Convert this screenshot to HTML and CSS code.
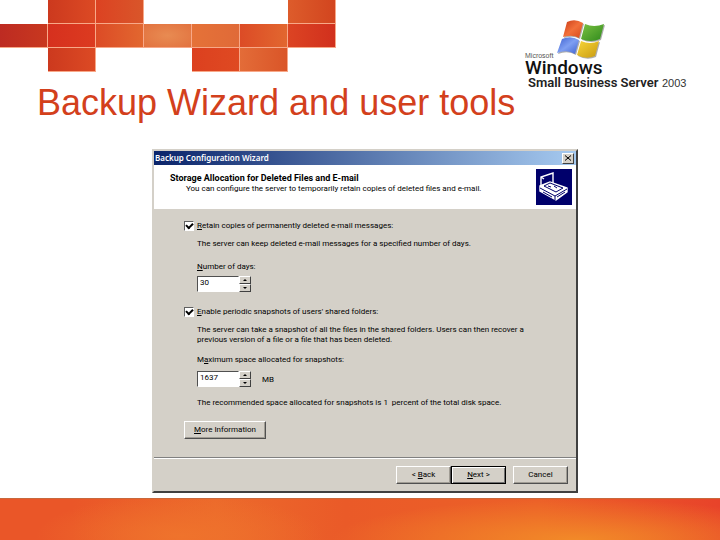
FILE: index.html
```
<!DOCTYPE html>
<html lang="en">
<head>
<meta charset="utf-8">
<title>Backup Wizard and user tools</title>
<link rel="stylesheet" href="styles.css">
</head>
<body>
<header class="top">
  <div class="intro">
    <div class="tiles" aria-hidden="true">
      <i></i><i class="t a"></i><i class="t b"></i><i></i><i></i><i></i><i class="t c"></i>
      <i class="t d"></i><i class="t e"></i><i class="t f"></i><i class="t g"></i><i class="t h"></i><i class="t f"></i><i class="t j"></i>
      <i></i><i class="t a"></i><i></i><i></i><i class="t k"></i><i class="t l"></i><i></i>
    </div>
    <h1>Backup Wizard and user tools</h1>
  </div>
  <svg class="logo" viewBox="0 0 196 94" role="img" aria-label="Microsoft Windows Small Business Server 2003">
    <defs>
      <linearGradient id="r" x1="0" y1="0" x2="1" y2="1"><stop offset="0" stop-color="#c93a16"/><stop offset=".5" stop-color="#f2703a"/><stop offset="1" stop-color="#d5481c"/></linearGradient>
      <linearGradient id="g" x1="0" y1="0" x2="1" y2="1"><stop offset="0" stop-color="#7cc242"/><stop offset="1" stop-color="#2f8a1c"/></linearGradient>
      <linearGradient id="b" x1="0" y1="0" x2="1" y2="1"><stop offset="0" stop-color="#3c5fd0"/><stop offset=".5" stop-color="#7f9ff2"/><stop offset="1" stop-color="#3f62cf"/></linearGradient>
      <linearGradient id="y" x1="0" y1="0" x2="1" y2="1"><stop offset="0" stop-color="#f8d63a"/><stop offset="1" stop-color="#c89a10"/></linearGradient>
    </defs>
    <g fill="#777" opacity=".6" transform="translate(1 1)">
      <path d="M43 22Q51 18 59 23L55 38Q48 34 39 37Z"/>
      <path d="M61 24Q70 28 80 24L76 39Q67 43 57 39Z"/>
      <path d="M38 39Q47 35 55 40L51 54Q43 49 33 53Z"/>
      <path d="M57 41Q66 45 75 41L71 56Q62 60 53 55Z"/>
    </g>
    <path fill="url(#r)" d="M43 22Q51 18 59 23L55 38Q48 34 39 37Z"/>
    <path fill="url(#g)" d="M61 24Q70 28 80 24L76 39Q67 43 57 39Z"/>
    <path fill="url(#b)" d="M38 39Q47 35 55 40L51 54Q43 49 33 53Z"/>
    <path fill="url(#y)" d="M57 41Q66 45 75 41L71 56Q62 60 53 55Z"/>
    <text class="maker" x="1" y="58">Microsoft</text>
    <text class="brand" x="1" y="74">Windows</text>
    <text class="edition" x="4" y="87">Small Business Server</text>
    <text class="year" x="138" y="87">2003</text>
  </svg>
</header>

<main>
  <form class="dialog">
    <div class="titlebar">
      <span>Backup Configuration Wizard</span>
      <button type="button" class="close" aria-label="Close"><svg viewBox="0 0 8 8"><path d="M1 1.5L7 6.5M7 1.5L1 6.5"/></svg></button>
    </div>
    <div class="banner">
      <div>
        <h2>Storage Allocation for Deleted Files and E-mail</h2>
        <p>You can configure the server to temporarily retain copies of deleted files and e-mail.</p>
      </div>
      <svg class="tape" viewBox="0 0 36 36" aria-hidden="true">
        <rect width="36" height="36" fill="#00006b"/>
        <g fill="none" stroke="#fff" stroke-width="1.4">
          <path d="M5 18V8L17 4V14M5 8L8 10"/>
          <path fill="#fff" d="M4 17L14 13L31 19V23L20 31L4 22Z"/>
        </g>
        <g fill="none" stroke="#00006b">
          <path d="M4 19L19 27L31 20M19 27V31M8 17L14 14L27 19L20 23Z"/>
          <path d="M12 17L15 18M18 17L21 19M7 23L16 28M21 28L29 23"/>
        </g>
      </svg>
    </div>
    <div class="body">
      <div class="check"><input type="checkbox" id="retain" checked><label for="retain"><u>R</u>etain copies of permanently deleted e-mail messages:</label></div>
      <div class="group">
        <p>The server can keep deleted e-mail messages for a specified number of days.</p>
        <label class="name" for="days"><u>N</u>umber of days:</label>
        <div class="spin">
          <input type="text" id="days" value="30">
          <div class="arrows"><button type="button" class="up" aria-label="More days"></button><button type="button" class="down" aria-label="Fewer days"></button></div>
        </div>
      </div>
      <div class="check second"><input type="checkbox" id="snap" checked><label for="snap"><u>E</u>nable periodic snapshots of users' shared folders:</label></div>
      <div class="group">
        <p>The server can take a snapshot of all the files in the shared folders. Users can then recover a<br>previous version of a file or a file that has been deleted.</p>
        <label class="name limit" for="space">M<u>a</u>ximum space allocated for snapshots:</label>
        <div class="spin">
          <input type="text" id="space" value="1637">
          <div class="arrows"><button type="button" class="up" aria-label="More space"></button><button type="button" class="down" aria-label="Less space"></button></div>
          <span class="unit">MB</span>
        </div>
        <p class="advice">The recommended space allocated for snapshots is 1&nbsp; percent of the total disk space.</p>
      </div>
      <button type="button" class="btn more"><u>M</u>ore Information</button>
    </div>
    <div class="actions">
      <button type="button" class="btn">&lt; <u>B</u>ack</button><button type="button" class="btn default"><u>N</u>ext &gt;</button><button type="button" class="btn cancel">Cancel</button>
    </div>
  </form>
</main>
<div class="band"></div>
</body>
</html>
```
FILE: styles.css
```
* { box-sizing: border-box; }
body {
  margin: 0;
  min-height: 100vh;
  display: flex;
  flex-direction: column;
  background: #fff;
  color: #000;
  font-family: "Liberation Sans", Arial, sans-serif;
}
h1, h2, p { margin: 0; }
button, input { font: inherit; color: inherit; margin: 0; border-radius: 0; }

.top { display: flex; justify-content: space-between; height: 149px; }
.tiles {
  display: grid;
  grid-template-columns: repeat(7, 48px);
  grid-auto-rows: 24px;
}
.t { border: solid #f8a888; border-width: 0 1px 1px 0; }
.a { background: linear-gradient(90deg, #cc391e, #dc4a24); }
.b { background: linear-gradient(90deg, #dc4222, #d9562a); }
.c { background: linear-gradient(90deg, #dd5c2b, #d2451f); }
.d { background: linear-gradient(90deg, #bd2b22, #c8381f); }
.e { background: linear-gradient(90deg, #d6301e, #dc3b20); }
.f { background: linear-gradient(90deg, #dc4b26, #e2672f); }
.g { background: radial-gradient(#e88b52, #e2723f); }
.h { background: linear-gradient(90deg, #e57238, #e06a38); }
.j { background: linear-gradient(90deg, #dc4423, #d1301d); }
.k { background: linear-gradient(90deg, #dc401f, #df4a22); }
.l { background: linear-gradient(90deg, #e36c38, #da5528); }
h1 {
  padding: 10px 0 0 37px;
  font-size: 36px;
  line-height: 42px;
  font-weight: 400;
  color: #d3401c;
  white-space: nowrap;
}
.logo { width: 196px; height: 94px; flex: none; }
.maker { font: 7px "Liberation Sans", sans-serif; fill: #555; }
.brand { font: 500 19px Roboto, sans-serif; fill: #111; }
.edition { font: 600 13px Roboto, sans-serif; fill: #222; }
.year { font: 11px "Liberation Sans", sans-serif; fill: #333; }

main { flex: 1; display: flex; padding: 0 142px 5px 152px; }
.dialog {
  flex: 1;
  display: flex;
  flex-direction: column;
  background: #d4d0c8;
  border: 2px solid #404040;
  border-top-color: #d4d0c8;
  border-left-color: #d4d0c8;
  font-family: Roboto, "Liberation Sans", sans-serif;
  font-size: 8px;
  line-height: 10px;
}
.titlebar {
  display: flex;
  align-items: center;
  justify-content: space-between;
  height: 14px;
  padding: 0 2px 0 1px;
  background: linear-gradient(90deg, #0a246a, #a6caf0);
  color: #fff;
  font-family: "Noto Sans", sans-serif;
  font-weight: 600;
}
.close {
  width: 12px;
  height: 11px;
  padding: 0;
  display: grid;
  place-items: center;
  background: #d4d0c8;
  border: 1px solid #404040;
  border-top-color: #fff;
  border-left-color: #fff;
}
.close svg { width: 8px; height: 8px; stroke: #000; fill: none; }
.banner {
  display: flex;
  justify-content: space-between;
  height: 44px;
  padding: 4px 4px 0 16px;
  background: #fff;
}
h2 { padding-top: 4px; font-size: 9px; line-height: 10px; }
.banner p { padding-left: 16px; line-height: 12px; }
.tape { width: 36px; height: 36px; flex: none; }

.body { flex: 1; padding: 12px 30px; white-space: nowrap; }
.check { display: flex; align-items: center; gap: 3px; height: 10px; }
.check input {
  appearance: none;
  width: 10px;
  height: 10px;
  background: #fff;
  border: 1px solid #fff;
  border-top-color: #606060;
  border-left-color: #606060;
  display: grid;
  place-items: center;
}
.check input:checked::before {
  content: "";
  width: 3px;
  height: 5px;
  border: solid #000;
  border-width: 0 2px 2px 0;
  transform: rotate(45deg) translate(-1px, -1px);
}
.group { padding: 8px 0 0 13px; }
.name { display: block; padding: 13px 0 4px; }
.limit { padding: 10px 0 6px; }
.second { margin-top: 15px; }
.spin { display: flex; height: 16px; }
.spin input {
  width: 42px;
  padding: 0 2px 2px;
  background: #fff;
  border: 1px solid #fff;
  border-top-color: #505050;
  border-left-color: #505050;
}
.arrows { display: grid; grid-template-rows: 8px 8px; width: 12px; }
.arrows button {
  padding: 0;
  display: grid;
  place-items: center;
  background: #d4d0c8;
  border: 1px solid #404040;
  border-top-color: #fff;
  border-left-color: #fff;
}
.arrows button::before { content: ""; border: 2px solid transparent; }
.arrows .up::before { border-top: 0; border-bottom-color: #000; }
.arrows .down::before { border-bottom: 0; border-top-color: #000; }
.unit { padding: 4px 0 0 11px; }
.advice { padding-top: 11px; }
.btn {
  width: 55px;
  height: 18px;
  padding: 0;
  background: #d4d0c8;
  border: 1px solid #505050;
  border-top-color: #fff;
  border-left-color: #fff;
  box-shadow: inset -1px -1px #a09c94;
}
.more { width: 82px; margin-top: 13px; }
.default { border-color: #000; box-shadow: inset 1px 1px #fff, inset -1px -1px #707070; }
.cancel { margin-left: 7px; }
.actions {
  display: flex;
  justify-content: flex-end;
  height: 34px;
  padding: 8px 8px 0 0;
  border-top: 1px solid #808080;
  box-shadow: inset 0 1px #fff;
}
.band {
  height: 42px;
  background:
    radial-gradient(ellipse 34% 100% at 80% 100%, #f28a28, transparent),
    radial-gradient(ellipse 20% 100% at 25% 90%, #ef732c, transparent),
    linear-gradient(90deg, #ea5628, #ea5628 10%, #ec6a2b 30%, #ea5a28 48%, #ec6028 75%, #e8432a);
  border-top: 1px solid #c8683c;
}
```
